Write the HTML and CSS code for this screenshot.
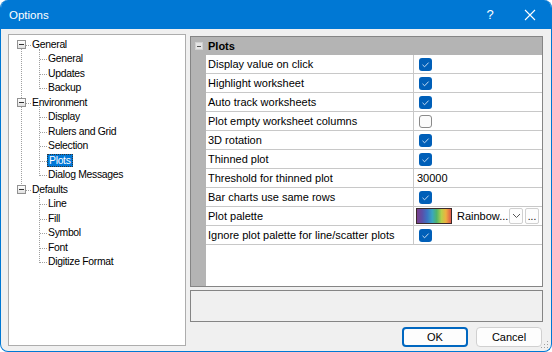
FILE: index.html
```html
<!DOCTYPE html>
<html lang="en">
<head>
    <meta charset="UTF-8">
    <title>Options</title>
    <link rel="stylesheet" href="styles.css">
</head>
<body>
    <div class="window">
        <div class="titlebar">
            <span class="title">Options</span>
            <span class="help">?</span>
            <span class="close">
                <svg width="12" height="12" viewBox="0 0 12 12"><path d="M1 1L11 11M11 1L1 11" stroke="#fff" stroke-width="1.1" fill="none"/></svg>
            </span>
        </div>
        <div class="content">
            <div class="tree">
                <div class="group">
                    <div class="node root"><span class="expander"></span><span class="label">General</span></div>
                    <div class="children">
                        <div class="node child"><span class="label">General</span></div>
                        <div class="node child"><span class="label">Updates</span></div>
                        <div class="node child"><span class="label">Backup</span></div>
                    </div>
                </div>
                <div class="group">
                    <div class="node root"><span class="expander"></span><span class="label">Environment</span></div>
                    <div class="children">
                        <div class="node child"><span class="label">Display</span></div>
                        <div class="node child"><span class="label">Rulers and Grid</span></div>
                        <div class="node child"><span class="label">Selection</span></div>
                        <div class="node child"><span class="label selected">Plots</span></div>
                        <div class="node child"><span class="label">Dialog Messages</span></div>
                    </div>
                </div>
                <div class="group last">
                    <div class="node root"><span class="expander"></span><span class="label">Defaults</span></div>
                    <div class="children">
                        <div class="node child"><span class="label">Line</span></div>
                        <div class="node child"><span class="label">Fill</span></div>
                        <div class="node child"><span class="label">Symbol</span></div>
                        <div class="node child"><span class="label">Font</span></div>
                        <div class="node child"><span class="label">Digitize Format</span></div>
                    </div>
                </div>
            </div>
            <div class="side">
                <div class="grid">
                    <div class="grid-head">
                        <span class="margin"><span class="expander small"></span></span>
                        <span class="cat">Plots</span>
                    </div>
                    <div class="grid-row"><span class="margin"></span><span class="name">Display value on click</span><span class="value"><span class="check on"></span></span></div>
                    <div class="grid-row"><span class="margin"></span><span class="name">Highlight worksheet</span><span class="value"><span class="check on"></span></span></div>
                    <div class="grid-row"><span class="margin"></span><span class="name">Auto track worksheets</span><span class="value"><span class="check on"></span></span></div>
                    <div class="grid-row"><span class="margin"></span><span class="name">Plot empty worksheet columns</span><span class="value"><span class="check"></span></span></div>
                    <div class="grid-row"><span class="margin"></span><span class="name">3D rotation</span><span class="value"><span class="check on"></span></span></div>
                    <div class="grid-row"><span class="margin"></span><span class="name">Thinned plot</span><span class="value"><span class="check on"></span></span></div>
                    <div class="grid-row"><span class="margin"></span><span class="name">Threshold for thinned plot</span><span class="value text">30000</span></div>
                    <div class="grid-row"><span class="margin"></span><span class="name">Bar charts use same rows</span><span class="value"><span class="check on"></span></span></div>
                    <div class="grid-row"><span class="margin"></span><span class="name">Plot palette</span>
                        <span class="value palette">
                            <span class="swatch"></span>
                            <span class="pal-name">Rainbow...</span>
                            <span class="mini-btn">
                                <svg width="9" height="6" viewBox="0 0 9 6"><path d="M1 1L4.5 4.5L8 1" stroke="#555" stroke-width="1" fill="none"/></svg>
                            </span>
                            <span class="mini-btn dots">...</span>
                        </span>
                    </div>
                    <div class="grid-row"><span class="margin"></span><span class="name">Ignore plot palette for line/scatter plots</span><span class="value"><span class="check on"></span></span></div>
                    <div class="grid-rest"><span class="margin"></span></div>
                </div>
                <div class="desc"></div>
                <div class="buttons">
                    <button class="btn default">OK</button>
                    <button class="btn">Cancel</button>
                </div>
            </div>
        </div>
        <svg class="grip" width="8" height="8" viewBox="0 0 8 8">
            <rect x="6" y="0" width="1" height="1" fill="#a0a0a0"/>
            <rect x="3" y="3" width="1" height="1" fill="#a0a0a0"/>
            <rect x="6" y="3" width="1" height="1" fill="#a0a0a0"/>
            <rect x="0" y="6" width="1" height="1" fill="#a0a0a0"/>
            <rect x="3" y="6" width="1" height="1" fill="#a0a0a0"/>
            <rect x="6" y="6" width="1" height="1" fill="#a0a0a0"/>
        </svg>
    </div>
</body>
</html>
```

FILE: styles.css
```css
body {
    margin: 0;
    background-color: #ffffff;
    font-family: "Liberation Sans", Arial, sans-serif;
    font-size: 11px;
    color: #000;
}
.window {
    position: relative;
    width: 552px;
    height: 352px;
    box-sizing: border-box;
    border: 1px solid #0078d4;
    border-top: none;
    border-radius: 8px;
    overflow: hidden;
    background-color: #f0f0f0;
    display: flex;
    flex-direction: column;
}
.titlebar {
    height: 29px;
    flex-shrink: 0;
    background-color: #0078d4;
    color: white;
    display: flex;
    align-items: center;
    padding-left: 8px;
    font-size: 11.5px;
}
.title {
    flex: 1;
}
.help {
    width: 30px;
    text-align: center;
    font-size: 13px;
    margin-right: 13px;
}
.close {
    width: 24px;
    height: 29px;
    margin-right: 9px;
    display: flex;
    align-items: center;
    justify-content: center;
}
.content {
    display: flex;
    padding: 5px 0 0 7px;
}

/* tree */
.tree {
    position: relative;
    width: 178px;
    height: 312px;
    box-sizing: border-box;
    border: 1px solid #adadad;
    background-color: white;
    padding-top: 2.5px;
    font-size: 10.4px;
    letter-spacing: -0.3px;
}
.tree::before {
    content: "";
    position: absolute;
    left: 12px;
    top: 9px;
    height: 146px;
    border-left: 1px dotted #a0a0a0;
}
.node {
    position: relative;
    height: 14.5px;
    line-height: 14.5px;
    white-space: nowrap;
}
.node.root {
    padding-left: 22px;
}
.node.root::after {
    content: "";
    position: absolute;
    left: 17px;
    top: 7px;
    width: 5px;
    border-top: 1px dotted #a0a0a0;
}
.node.child {
    padding-left: 38px;
}
.node.child::before {
    content: "";
    position: absolute;
    left: 31px;
    top: 7px;
    width: 7px;
    border-top: 1px dotted #a0a0a0;
}
.children {
    position: relative;
}
.children::before {
    content: "";
    position: absolute;
    left: 30px;
    top: -3px;
    bottom: 7px;
    border-left: 1px dotted #a0a0a0;
}
.expander {
    position: absolute;
    left: 8px;
    top: 2.5px;
    width: 9px;
    height: 9px;
    box-sizing: border-box;
    border: 1px solid #919191;
    background: linear-gradient(#ffffff, #e0e0e0);
    z-index: 1;
}
.expander::after {
    content: "";
    position: absolute;
    left: 1px;
    top: 3px;
    width: 5px;
    height: 1px;
    background-color: #333;
}
.label {
    padding: 0 1px;
}
.label.selected {
    background-color: #0078d7;
    color: white;
    outline: 1px dotted #333;
    outline-offset: -1px;
    padding: 1px 2px;
}

/* property grid */
.side {
    width: 353px;
    margin-left: 4px;
    padding-top: 2px;
}
.grid {
    height: 251px;
    box-sizing: border-box;
    border: 1px solid #858585;
    background-color: white;
    display: flex;
    flex-direction: column;
}
.grid-head {
    height: 18px;
    display: flex;
    align-items: center;
    background-color: #b4b4b4;
    font-weight: bold;
}
.margin {
    position: relative;
    width: 15px;
    align-self: stretch;
    flex-shrink: 0;
    background-color: #b4b4b4;
}
.expander.small {
    left: 4px;
    top: 5px;
    width: 8px;
    height: 8px;
    border-color: #d0d0d0;
    background: #e4e4e4;
}
.expander.small::after {
    left: 1px;
    top: 3px;
    width: 4px;
    background-color: #555;
}
.cat {
    padding-left: 2px;
}
.grid-row {
    height: 19px;
    display: flex;
}
.name {
    width: 208px;
    box-sizing: border-box;
    padding-left: 2px;
    line-height: 18px;
    border-bottom: 1px solid #c8c8c8;
    border-right: 1px solid #c8c8c8;
    white-space: nowrap;
    overflow: hidden;
}
.value {
    flex: 1;
    display: flex;
    align-items: center;
    padding-left: 5px;
    border-bottom: 1px solid #c8c8c8;
}
.value.text {
    padding-left: 3px;
}
.grid-rest {
    flex: 1;
    display: flex;
}
.check {
    width: 13px;
    height: 13px;
    box-sizing: border-box;
    border: 1px solid #8a8a8a;
    border-radius: 3px;
    background-color: #fbfbfb;
}
.check.on {
    border: none;
    background-color: #005fb8;
    background-image: url("data:image/svg+xml,%3Csvg xmlns='http://www.w3.org/2000/svg' width='13' height='13'%3E%3Cpath d='M3.5 6.8L5.6 8.8L9.6 4.6' stroke='%23d8e8f8' stroke-width='0.9' fill='none'/%3E%3C/svg%3E");
}
.value.palette {
    padding-left: 2px;
}
.swatch {
    width: 34px;
    height: 14px;
    border: 1px solid #3a2a2a;
    background: linear-gradient(90deg, #7a3f8c, #5b4fa8 15%, #3a74c4 30%, #3aa6c0 45%, #4fb46a 58%, #b8d04a 72%, #f0b040 85%, #e0584a);
}
.pal-name {
    margin-left: 5px;
    width: 51px;
    white-space: nowrap;
}
.mini-btn {
    width: 14px;
    height: 16px;
    box-sizing: border-box;
    border: 1px solid #d0d0d0;
    border-radius: 2px;
    background-color: #fdfdfd;
    display: flex;
    align-items: center;
    justify-content: center;
    margin-left: 1px;
}
.mini-btn.dots {
    margin-left: 2px;
    align-items: flex-end;
    line-height: 12px;
    font-size: 10px;
}
.desc {
    margin-top: 3px;
    height: 32px;
    box-sizing: border-box;
    border: 1px solid #858585;
}
.buttons {
    display: flex;
    justify-content: flex-end;
    gap: 8px;
    margin-top: 5px;
    padding-right: 1px;
}
.btn {
    width: 66px;
    height: 20px;
    box-sizing: border-box;
    border: 1px solid #d0d0d0;
    border-radius: 4px;
    background-color: #fdfdfd;
    font-family: inherit;
    font-size: 11px;
    padding: 0;
}
.btn.default {
    border: 2px solid #0067c0;
}
.grip {
    position: absolute;
    right: 2px;
    bottom: 2px;
}
```
